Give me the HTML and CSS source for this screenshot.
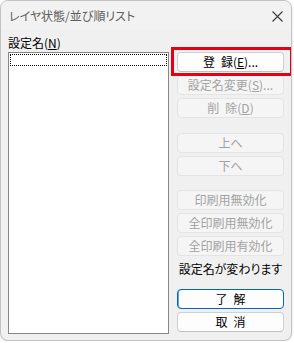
FILE: index.html
```html
<!DOCTYPE html>
<html lang="ja">
<head>
<meta charset="utf-8">
<link rel="stylesheet" href="styles.css">
</head>
<body>
<div class="window">
  <div class="titlebar">
    <span class="title">レイヤ状態/並び順リスト</span>
    <svg class="close" width="11" height="11" viewBox="0 0 11 11"><path d="M0.5 0.5L10.5 10.5M10.5 0.5L0.5 10.5" stroke="#3a3a3a" stroke-width="1.1" fill="none"/></svg>
  </div>
  <div class="client">
    <div class="left">
      <div class="label">設定名(<u>N</u>)</div>
      <div class="list"><div class="focus"></div></div>
    </div>
    <div class="right">
      <div class="marked">
        <button class="btn">登&ensp;録(<u>E</u>)...</button>
        <span class="mark"></span>
      </div>
      <button class="btn" disabled>設定名変更(<u>S</u>)...</button>
      <button class="btn" disabled>削&ensp;除(<u>D</u>)</button>
      <button class="btn gap" disabled>上へ</button>
      <button class="btn" disabled>下へ</button>
      <button class="btn gap2" disabled>印刷用無効化</button>
      <button class="btn" disabled>全印刷用無効化</button>
      <button class="btn" disabled>全印刷用有効化</button>
      <div class="note">設定名が変わります</div>
      <button class="btn default gap3">了&ensp;解</button>
      <button class="btn">取&ensp;消</button>
    </div>
  </div>
</div>
</body>
</html>
```

FILE: styles.css
```css
html, body {
  margin: 0;
  padding: 0;
  background: #ffffff;
}
body {
  font-family: "Noto Sans CJK JP", "Noto Sans", sans-serif;
  font-size: 12px;
  font-feature-settings: "palt";
  color: #000;
}
.window {
  box-sizing: border-box;
  width: 292px;
  height: 341px;
  border: 1px solid #c2c2c2;
  border-radius: 8px;
  background: #f0f0f0;
  display: flex;
  flex-direction: column;
  overflow: hidden;
  box-shadow: 0 1px 3px rgba(0,0,0,0.12);
}
.titlebar {
  height: 29px;
  display: flex;
  align-items: center;
  justify-content: space-between;
  padding: 0 8px 0 8px;
  background: #f2f2f2;
}
.title {
  color: #5e5e5e;
  font-size: 12px;
  line-height: 14px;
  padding-top: 1px;
}
.close {
  display: block;
  margin-top: 1px;
}
.client {
  flex: 1;
  display: flex;
  gap: 8px;
  padding: 6px 7px 0 7px;
}
.left {
  display: flex;
  flex-direction: column;
  gap: 2px;
}
.label {
  line-height: 14px;
  height: 14px;
}
u {
  text-decoration-thickness: 1px;
  text-underline-offset: 1px;
}
.list {
  box-sizing: border-box;
  width: 161px;
  height: 282px;
  background: #fff;
  border: 1px solid #878787;
  padding: 1px;
}
.focus {
  box-sizing: border-box;
  height: 12px;
  border: 1px dotted #000;
}
.right {
  width: 107px;
  display: flex;
  flex-direction: column;
  gap: 3px;
  padding-top: 16px;
}
.marked {
  position: relative;
  display: flex;
  flex-direction: column;
}
.mark {
  position: absolute;
  top: -5px;
  left: -6px;
  right: -9px;
  bottom: -4px;
  border: 3px solid #e60012;
  pointer-events: none;
}
.btn {
  box-sizing: border-box;
  height: 20px;
  width: 100%;
  margin: 0;
  padding: 0;
  font-family: inherit;
  font-size: 12px;
  font-feature-settings: "palt";
  line-height: 18px;
  color: #000;
  background: #fdfdfd;
  border: 1px solid #d0d0d0;
  border-bottom-color: #c0c0c0;
  border-radius: 4px;
  text-align: center;
}
.btn:disabled {
  color: #a2a2a2;
  background: #f5f5f5;
  border-color: #e4e4e4;
}
.btn.default {
  border-color: #0067c0;
  box-shadow: inset 1px 0 0 rgba(0,103,192,0.6);
}
.gap { margin-top: 12px; }
.gap2 { margin-top: 11px; }
.gap3 { margin-top: 7px; }
.note {
  height: 20px;
  line-height: 20px;
  text-align: center;
  white-space: nowrap;
}
```
